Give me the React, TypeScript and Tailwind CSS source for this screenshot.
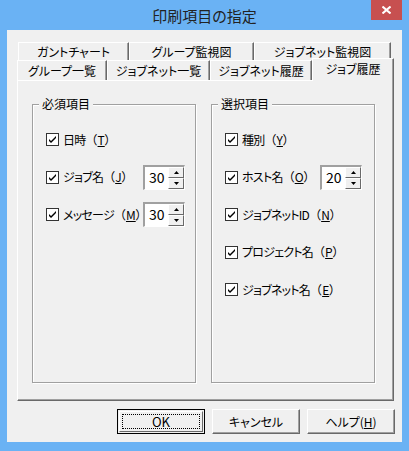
import React from "react";

function CheckBox() {
  return (
    <span className="flex h-[13px] w-[13px] shrink-0 items-center justify-center border border-[#333] bg-white">
      <svg width="9" height="9" viewBox="0 0 9 9">
        <path d="M1 4 L3 6 L8 1 L8 3 L3 8 L1 6 Z" fill="#000" />
      </svg>
    </span>
  );
}

function SpinBox({ value }: { value: string }) {
  return (
    <div className="flex h-[25px] w-[42px] shrink-0 border-t-2 border-l-2 border-t-[#a0a0a0] border-l-[#a0a0a0] border-b border-r border-b-white border-r-white bg-white">
      <div className="flex-1 pl-[4px] text-[14px] leading-[21px] text-black">{value}</div>
      <div className="flex w-[16px] flex-col">
        {["up", "down"].map((d) => (
          <div
            key={d}
            className="flex flex-1 items-center justify-center border-t border-l border-white border-r border-b border-r-[#696969] border-b-[#696969] bg-[#f0f0f0]"
          >
            <svg width="5" height="3" viewBox="0 0 5 3">
              {d === "up" ? (
                <path d="M2.5 0 L5 3 L0 3 Z" fill="#000" />
              ) : (
                <path d="M0 0 L5 0 L2.5 3 Z" fill="#000" />
              )}
            </svg>
          </div>
        ))}
      </div>
    </div>
  );
}

type Row = { name: string; key: string; spin?: string };

function Group({ title, rows, labelWidth }: { title: string; rows: Row[]; labelWidth: string }) {
  return (
    <div className="relative h-[279px] w-[164px] border border-[#a0a0a0] shadow-[inset_1px_1px_0_#fff,1px_1px_0_#fff]">
      <span className="absolute -top-[9px] left-[6px] bg-[#f0f0f0] px-[3px] text-[12px] leading-[16px]">
        {title}
      </span>
      <div className="flex flex-col gap-[12.5px] pl-[13px] pt-[22px]">
        {rows.map((r) => (
          <div key={r.key} className="flex h-[25px] items-center">
            <CheckBox />
            <span className={labelWidth + " ml-[4px] text-[12px] leading-[16px] whitespace-nowrap"}>
              <span className="tracking-[-0.75px]">{r.name}</span>
              <span className="[font-feature-settings:normal]">（</span>
              <u>{r.key}</u>）
            </span>
            {r.spin && <SpinBox value={r.spin} />}
          </div>
        ))}
      </div>
    </div>
  );
}

const tab =
  "flex items-center justify-center border-t border-l border-white border-r border-r-[#696969] shadow-[inset_-1px_0_0_#a0a0a0] text-[12px] whitespace-nowrap";

export default function App() {
  const required: Row[] = [
    { name: "日時", key: "T" },
    { name: "ジョブ名", key: "J", spin: "30" },
    { name: "メッセージ", key: "M", spin: "30" },
  ];
  const optional: Row[] = [
    { name: "種別", key: "Y" },
    { name: "ホスト名", key: "O", spin: "20" },
    { name: "ジョブネットID", key: "N" },
    { name: "プロジェクト名", key: "P" },
    { name: "ジョブネット名", key: "E" },
  ];

  return (
    <div className="flex h-[451px] w-[409px] flex-col bg-[#6ab2f4] font-['Noto_Sans_CJK_JP',sans-serif] text-black [font-feature-settings:'palt']">
      {/* title bar */}
      <div className="relative flex h-[30px] items-center justify-center">
        <span className="text-[15px] leading-none text-[#222]">印刷項目の指定</span>
        <div className="absolute right-[7px] top-0 flex h-[20px] w-[31px] items-center justify-center bg-[#c75050]">
          <svg width="9" height="8" viewBox="0 0 9 8">
            <path d="M0.5 0.5 L8.5 7.5 M8.5 0.5 L0.5 7.5" stroke="#fff" strokeWidth="2" />
          </svg>
        </div>
      </div>

      {/* client area */}
      <div className="mx-[7px] h-[412px] bg-[#f0f0f0] pl-[10px] pt-[12px]">
        <div className="w-[377px]">
          {/* back tab row */}
          <div className="ml-[1px] flex h-[18px]">
            <div className={tab + " w-[111px]"}>ガントチャート</div>
            <div className={tab + " w-[125px]"}>グループ監視図</div>
            <div className={tab + " w-[137px]"}>ジョブネット監視図</div>
          </div>
          {/* front tab row */}
          <div className="flex h-[20px] items-end">
            <div className={tab + " h-[20px] w-[90px]"}>グループ一覧</div>
            <div className={tab + " h-[20px] w-[103px]"}>ジョブネット一覧</div>
            <div className={tab + " h-[20px] w-[102px]"}>ジョブネット履歴</div>
            <div className={tab + " relative z-10 -mb-px h-[23px] w-[82px] bg-[#f0f0f0] pb-[3px]"}>ジョブ履歴</div>
          </div>
          {/* panel */}
          <div className="flex h-[321px] gap-[15px] border-t border-l border-white border-r border-b border-r-[#696969] border-b-[#696969] pl-[14px] pt-[23px] shadow-[inset_-1px_-1px_0_#a0a0a0]">
            <Group title="必須項目" rows={required} labelWidth="w-[80px]" />
            <Group title="選択項目" rows={optional} labelWidth="w-[78px]" />
          </div>
        </div>

        {/* buttons */}
        <div className="mr-[7px] mt-[8px] flex justify-end gap-[7px]">
          <button className="h-[25px] w-[88px] border border-black bg-[#f0f0f0] p-[1px] text-[13px]">
            <div className="flex h-full w-full items-center justify-center border-t border-l border-white border-r border-b border-r-[#696969] border-b-[#696969]">
              <div className="flex h-[15px] w-[78px] items-center justify-center border border-dotted border-black">OK</div>
            </div>
          </button>
          <button className="flex h-[25px] w-[88px] items-center justify-center border-t border-l border-white border-r border-b border-r-[#696969] border-b-[#696969] bg-[#f0f0f0] text-[12px] shadow-[inset_-1px_-1px_0_#a0a0a0]">
            キャンセル
          </button>
          <button className="flex h-[25px] w-[88px] items-center justify-center border-t border-l border-white border-r border-b border-r-[#696969] border-b-[#696969] bg-[#f0f0f0] text-[12px] shadow-[inset_-1px_-1px_0_#a0a0a0]">
            ヘルプ(<u>H</u>)
          </button>
        </div>
      </div>
    </div>
  );
}
